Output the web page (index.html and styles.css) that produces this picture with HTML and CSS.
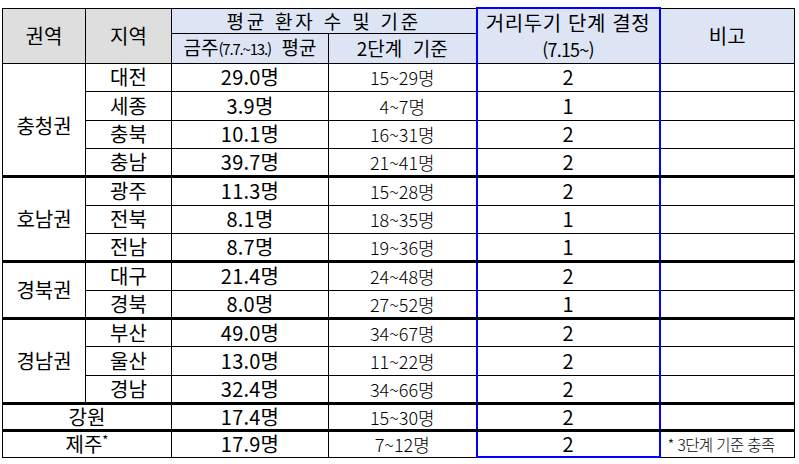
FILE: index.html
```html
<!DOCTYPE html>
<html lang="ko">
<head>
<meta charset="utf-8">
<link rel="stylesheet" href="styles.css">
</head>
<body>
<table class="tbl">
  <colgroup>
    <col class="c1"><col class="c2"><col class="c3"><col class="c4"><col class="c5"><col class="c6">
  </colgroup>
  <thead>
    <tr class="h1">
      <th rowspan="2" class="gray">권역</th>
      <th rowspan="2" class="gray">지역</th>
      <th colspan="2" class="blue wide">평균 환자 수 및 기준</th>
      <th rowspan="2" class="blue step stepTop"><span class="l1">거리두기 단계 결정</span><br><span class="cond big">(7.15~)</span></th>
      <th rowspan="2" class="blue">비고</th>
    </tr>
    <tr class="h2">
      <th class="blue">금주<span class="cond">(7.7.~13.)</span>&nbsp; 평균</th>
      <th class="blue">2단계&nbsp; 기준</th>
    </tr>
  </thead>
  <tbody>
    <tr>
      <td rowspan="4" class="region r1">충청권</td>
      <td>대전</td><td class="num">29.0명</td><td class="lim">15~29명</td><td class="step">2</td><td></td>
    </tr>
    <tr class="t29"><td>세종</td><td class="num">3.9명</td><td class="lim">4~7명</td><td class="step">1</td><td></td></tr>
    <tr><td>충북</td><td class="num">10.1명</td><td class="lim">16~31명</td><td class="step">2</td><td></td></tr>
    <tr><td>충남</td><td class="num">39.7명</td><td class="lim">21~41명</td><td class="step">2</td><td></td></tr>

    <tr class="grp t29">
      <td rowspan="3" class="region">호남권</td>
      <td>광주</td><td class="num">11.3명</td><td class="lim">15~28명</td><td class="step">2</td><td></td>
    </tr>
    <tr><td>전북</td><td class="num">8.1명</td><td class="lim">18~35명</td><td class="step">1</td><td></td></tr>
    <tr><td>전남</td><td class="num">8.7명</td><td class="lim">19~36명</td><td class="step">1</td><td></td></tr>

    <tr class="grp t29">
      <td rowspan="2" class="region">경북권</td>
      <td>대구</td><td class="num">21.4명</td><td class="lim">24~48명</td><td class="step">2</td><td></td>
    </tr>
    <tr><td>경북</td><td class="num">8.0명</td><td class="lim">27~52명</td><td class="step">1</td><td></td></tr>

    <tr class="grp">
      <td rowspan="3" class="region">경남권</td>
      <td>부산</td><td class="num">49.0명</td><td class="lim">34~67명</td><td class="step">2</td><td></td>
    </tr>
    <tr class="t29"><td>울산</td><td class="num">13.0명</td><td class="lim">11~22명</td><td class="step">2</td><td></td></tr>
    <tr><td>경남</td><td class="num">32.4명</td><td class="lim">34~66명</td><td class="step">2</td><td></td></tr>

    <tr class="grp t27">
      <td colspan="2">강원</td><td class="num">17.4명</td><td class="lim">15~30명</td><td class="step">2</td><td></td>
    </tr>
    <tr class="grp t27 last">
      <td colspan="2">제주<sup class="ast">*</sup></td><td class="num">17.9명</td><td class="lim">7~12명</td><td class="step stepBot">2</td><td class="note">* 3단계 기준 충족</td>
    </tr>
  </tbody>
</table>
</body>
</html>
```
FILE: styles.css
```css
html, body {
  margin: 0;
  padding: 0;
  background: #ffffff;
}
body {
  font-family: "Noto Sans CJK KR", "Noto Sans", sans-serif;
  color: #000;
}
.tbl {
  margin: 7px 0 0 2px;
  border-collapse: collapse;
  table-layout: fixed;
  width: 792px;
  border: 1px solid #000;
}
.c1 { width: 83px; }
.c2 { width: 86px; }
.c3 { width: 157px; }
.c4 { width: 148px; }
.c5 { width: 183px; }
.c6 { width: 135px; }

th, td {
  border: 1px solid #000;
  padding: 0;
  text-align: center;
  vertical-align: middle;
  font-size: 20px;
  font-weight: 400;
  line-height: 20px;
  white-space: nowrap;
  overflow: hidden;
}
.gray { background: #dedede; }
.blue { background: #dde5f5; }
.h1 { height: 25px; }
.h2 { height: 30px; }
.h1 th.wide { font-size: 19px; letter-spacing: 2.8px; }
.h1 th.step { line-height: 26px; }
.l1 { letter-spacing: 0.6px; }
.h2 th { font-size: 19px; }
.cond {
  font-size: 15px;
  letter-spacing: -1.2px;
}
.cond.big {
  font-size: 18px;
  letter-spacing: -0.8px;
}
tbody tr { height: 28px; }
tbody tr.t29 { height: 29px; }
tbody tr.t27 { height: 27px; }
tr.grp td { border-top: 3px solid #000; }

.num { font-size: 20px; letter-spacing: 0.2px; }
.lim {
  font-size: 18px;
  font-weight: 300;
  letter-spacing: 0;
}
.step {
  border-left: 2px solid #0000ff;
  border-right: 2px solid #0000ff;
}
th.stepTop { border-top: 2px solid #0000ff; }
td.stepBot { border-bottom: 2px solid #0000ff; }
.region { font-size: 20px; }
.r1 { padding-top: 14px; }
.ast {
  font-size: 13px;
  line-height: 0;
  vertical-align: 7px;
}
.note {
  text-align: left;
  padding-left: 7px;
  font-size: 15.5px;
  font-weight: 300;
  letter-spacing: -0.6px;
}
```
